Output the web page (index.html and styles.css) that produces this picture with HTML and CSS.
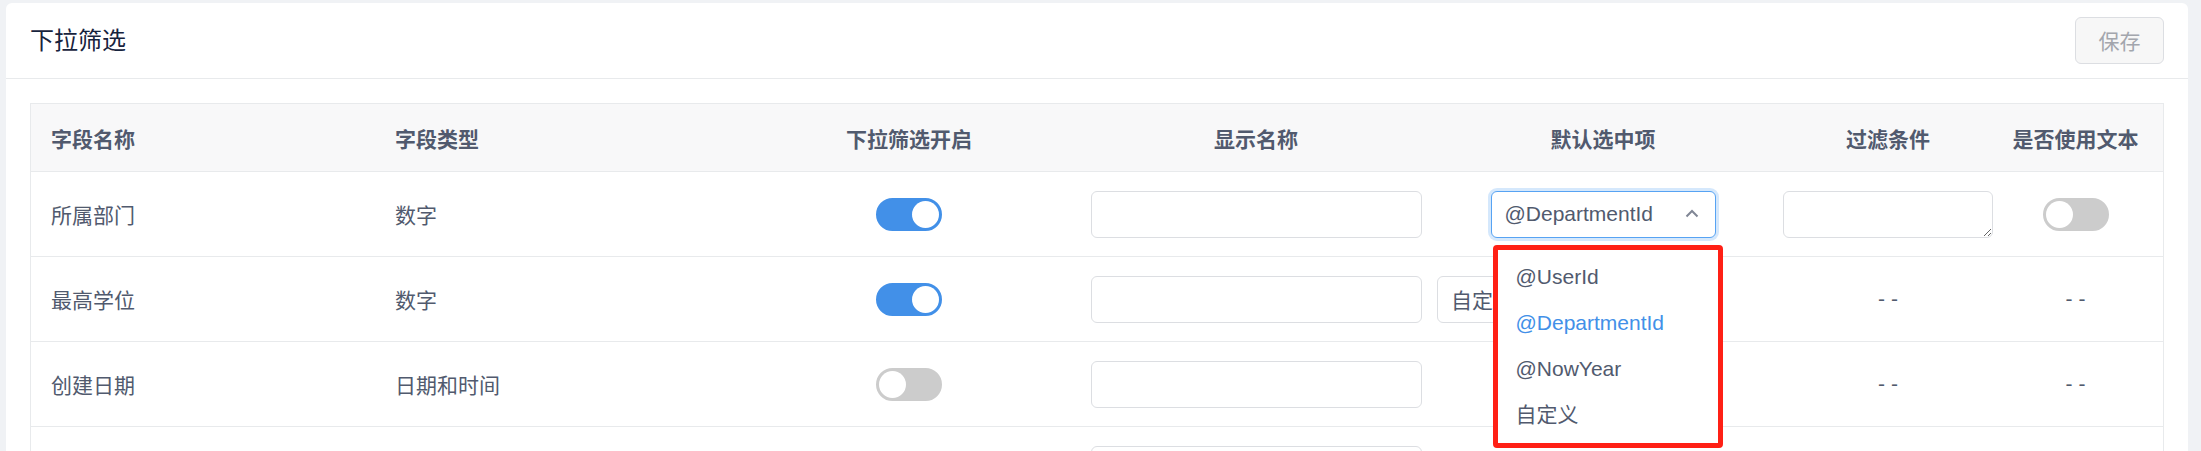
FILE: index.html
```html
<!DOCTYPE html>
<html lang="zh-CN">
<head>
  <meta charset="UTF-8">
  <meta name="viewport" content="width=device-width, initial-scale=1.0">
  <title>下拉筛选</title>
  <link rel="stylesheet" href="styles.css">
</head>
<body>
  <div class="card">
    <div class="card-head">
      <span class="card-title">下拉筛选</span>
      <button class="btn-save" disabled>保存</button>
    </div>
    <div class="card-body">
      <div class="table">
        <div class="row head">
          <div class="cell left">字段名称</div>
          <div class="cell left">字段类型</div>
          <div class="cell">下拉筛选开启</div>
          <div class="cell">显示名称</div>
          <div class="cell">默认选中项</div>
          <div class="cell">过滤条件</div>
          <div class="cell last">是否使用文本</div>
        </div>

        <div class="row">
          <div class="cell left">所属部门</div>
          <div class="cell left">数字</div>
          <div class="cell"><span class="switch on"></span></div>
          <div class="cell"><input type="text" class="input"></div>
          <div class="cell">
            <div class="select focused">
              <span class="select-value">@DepartmentId</span>
              <svg class="select-arrow" width="14" height="9" viewBox="0 0 14 9"><polyline points="1.5,7.5 7,2 12.5,7.5" fill="none" stroke="#808695" stroke-width="2"/></svg>
              <!-- open menu of the select -->
              <ul class="dropdown">
                <li>@UserId</li>
                <li class="selected">@DepartmentId</li>
                <li>@NowYear</li>
                <li>自定义</li>
              </ul>
            </div>
          </div>
          <div class="cell"><textarea class="textarea"></textarea></div>
          <div class="cell last"><span class="switch"></span></div>
        </div>

        <div class="row">
          <div class="cell left">最高学位</div>
          <div class="cell left">数字</div>
          <div class="cell"><span class="switch on"></span></div>
          <div class="cell"><input type="text" class="input"></div>
          <div class="cell custom">
            <div class="select small"><span class="select-value">自定义</span></div>
            <input type="text" class="input short">
          </div>
          <div class="cell">- -</div>
          <div class="cell last">- -</div>
        </div>

        <div class="row">
          <div class="cell left">创建日期</div>
          <div class="cell left">日期和时间</div>
          <div class="cell"><span class="switch"></span></div>
          <div class="cell"><input type="text" class="input"></div>
          <div class="cell"></div>
          <div class="cell">- -</div>
          <div class="cell last">- -</div>
        </div>

        <div class="row">
          <div class="cell left"></div>
          <div class="cell left"></div>
          <div class="cell"><span class="switch"></span></div>
          <div class="cell"><input type="text" class="input"></div>
          <div class="cell"></div>
          <div class="cell"></div>
          <div class="cell last"></div>
        </div>
      </div>
    </div>
  </div>
</body>
</html>
```

FILE: styles.css
```css
* {
  box-sizing: border-box;
}

body {
  margin: 0;
  padding: 3px 13px 0 6px;
  background-color: #f0f2f5;
  font-family: "Liberation Sans", "Noto Sans CJK SC", sans-serif;
  font-size: 21px;
  color: #515a6e;
}

.card {
  background: #fff;
  border-radius: 6px;
}

.card-head {
  display: flex;
  align-items: center;
  justify-content: space-between;
  height: 76px;
  padding: 0 24px;
  border-bottom: 1px solid #e8eaec;
}

.card-title {
  font-size: 24px;
  color: #17233d;
  margin-top: -4px;
}

.btn-save {
  width: 89px;
  height: 47px;
  margin-top: -1px;
  border: 1px solid #dcdee2;
  border-radius: 6px;
  background-color: #f7f7f7;
  color: #a3a6ad;
  font-family: inherit;
  font-size: 21px;
}

.card-body {
  padding: 24px;
}

.table {
  border: 1px solid #e8eaec;
  border-bottom: none;
}

.row {
  display: grid;
  grid-template-columns: 344px 361px 346px 348px 346px 224px 163px;
  height: 85px;
  border-bottom: 1px solid #e8eaec;
}

.row.head {
  height: 68px;
  background-color: #f8f8f9;
  font-weight: bold;
}

.cell {
  display: flex;
  align-items: center;
  justify-content: center;
  min-width: 0;
}

.cell.left {
  justify-content: flex-start;
  padding-left: 20px;
}

.cell.last {
  padding-right: 12px;
}

.cell.custom {
  justify-content: flex-start;
  gap: 8px;
  padding-left: 7px;
}

/* switch */
.switch {
  position: relative;
  display: inline-block;
  width: 66px;
  height: 33px;
  border-radius: 17px;
  background-color: #cccccc;
  border: 2px solid #cccccc;
}

.switch::after {
  content: "";
  position: absolute;
  top: 1px;
  left: 1px;
  width: 27px;
  height: 27px;
  border-radius: 50%;
  background: #fff;
}

.switch.on {
  background-color: #4290e8;
  border-color: #4290e8;
}

.switch.on::after {
  left: auto;
  right: 1px;
}

/* form controls */
.input {
  width: 331px;
  height: 47px;
  border: 1px solid #dcdee2;
  border-radius: 6px;
  background: #fff;
}

.input.short {
  width: 140px;
}

.textarea {
  width: 210px;
  height: 47px;
  border: 1px solid #dcdee2;
  border-radius: 6px;
  background: #fff;
}

.select {
  position: relative;
  display: flex;
  align-items: center;
  justify-content: space-between;
  width: 225px;
  height: 47px;
  padding: 0 16px 0 13px;
  border: 1px solid #dcdee2;
  border-radius: 6px;
  background: #fff;
}

.select.focused {
  border-color: #57a3f3;
  box-shadow: 0 0 0 3px rgba(45, 140, 240, 0.2);
}

.select.small {
  width: 130px;
}

.select-arrow {
  margin-top: -2px;
}

.dropdown {
  position: absolute;
  top: calc(100% + 8px);
  left: 1px;
  width: 230px;
  height: 203px;
  margin: 0;
  padding: 4px 0 0 18px;
  list-style: none;
  background: #fff;
  border: 5px solid #ff2015;
  border-radius: 4px;
  z-index: 10;
}

.dropdown li {
  height: 46px;
  line-height: 46px;
  white-space: nowrap;
}

.dropdown li.selected {
  color: #4290e8;
}
```
